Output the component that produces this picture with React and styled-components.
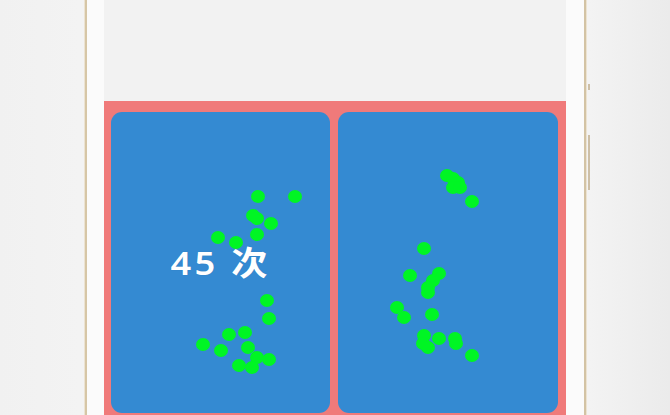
import styled, { createGlobalStyle } from 'styled-components'

const GlobalStyle = createGlobalStyle`
    html, body {
        margin: 0;
        padding: 0;
        height: 415px;
        overflow: hidden;
        background: #eeeeee;
    }
`

// dot positions inside each card (px from card's top-left)
const leftDots = [
    [147, 84], [184, 84], [142, 103], [146, 106], [160, 111], [146, 122],
    [107, 125], [125, 130], [156, 188], [158, 206], [118, 222], [134, 220],
    [92, 232], [110, 238], [137, 235], [146, 245], [158, 247], [128, 253],
    [141, 255],
]

const rightDots = [
    [109, 63], [115, 66], [120, 70], [115, 75], [122, 75], [134, 89],
    [86, 136], [72, 163], [101, 161], [95, 168], [90, 175], [90, 180],
    [59, 195], [66, 205], [94, 202], [86, 223], [85, 231], [90, 235],
    [101, 226], [117, 226], [118, 231], [134, 243],
]

const App = () => {
    return (
        <>
            <GlobalStyle />
            <Page>
                <Phone>
                    <SideButton top={84} height={6} />
                    <SideButton top={135} height={55} />
                    <Screen>
                        <Panel>
                            <Card>
                                {leftDots.map(([x, y], i) => (
                                    <Dot key={i} style={{ left: x, top: y }} />
                                ))}
                                <Count>45 次</Count>
                            </Card>
                            <Card>
                                {rightDots.map(([x, y], i) => (
                                    <Dot key={i} style={{ left: x, top: y }} />
                                ))}
                            </Card>
                        </Panel>
                    </Screen>
                </Phone>
            </Page>
        </>
    )
}

const Page = styled.div`
    height: 415px;
    display: flex;
    justify-content: center;
    background: linear-gradient(90deg, #f1f1f1 0%, #f3f3f3 12%, #f3f3f3 88%, #ebebeb 100%);
`

const Phone = styled.div`
    position: relative;
    width: 501px;
    height: 100%;
    padding: 0 18px 0 17px;
    box-sizing: border-box;
    background: #fbfbfb;
    border-left: 2px solid #d6c6a6;
    border-right: 2px solid #d3c3a4;
    box-shadow: -1px 0 0 #ece3d2, 1px 0 0 #ece3d2;
`

const SideButton = styled.div`
    position: absolute;
    right: -6px;
    top: ${(p) => p.top}px;
    width: 2px;
    height: ${(p) => p.height}px;
    background: #cdbfa6;
`

const Screen = styled.div`
    height: 100%;
    padding-top: 101px;
    box-sizing: border-box;
    background: #f2f2f2;
`

const Panel = styled.div`
    display: flex;
    gap: 8px;
    padding: 11px 8px 11px 7px;
    background: #f07a7a;
`

const Card = styled.div`
    position: relative;
    flex: 1;
    height: 301px;
    border-radius: 11px;
    background: #348ad2;
    display: flex;
    align-items: center;
    justify-content: center;
`

const Dot = styled.span`
    position: absolute;
    width: 14px;
    height: 13px;
    margin: -6.5px 0 0 -7px;
    border-radius: 50%;
    background: #00f524;
`

const Count = styled.span`
    position: relative;
    color: #ffffff;
    font-family: 'Noto Sans', 'Noto Sans CJK SC', sans-serif;
    font-weight: 600;
    font-size: 33px;
    letter-spacing: 3px;
    line-height: 1;
    transform: scaleX(1.1);
    text-shadow: 0 0 1px rgba(0, 0, 0, 0.15);
`

export default App
